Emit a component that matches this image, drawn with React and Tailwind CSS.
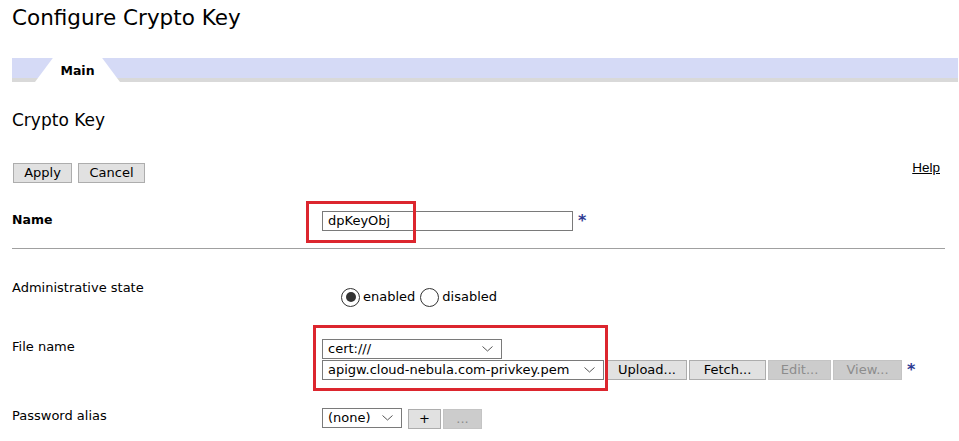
import React from 'react';

const Chevron = () => (
    <svg width="11" height="6" viewBox="0 0 11 6" className="shrink-0">
        <polyline points="0.5,0.5 5.5,5 10.5,0.5" fill="none" stroke="#555" strokeWidth="1" />
    </svg>
);

const Select = ({ value, width }) => (
    <div
        className="flex items-center justify-between h-[20px] border border-[#7a7a7a] bg-white pl-[5px] pr-[8px] text-[13px] leading-[16px] whitespace-nowrap"
        style={{ width }}
    >
        <span>{value}</span>
        <Chevron />
    </div>
);

const Btn = ({ children, width, disabled }) => (
    <div
        className={`h-[20px] flex items-center justify-center border text-[13px] leading-[16px] ${disabled ? 'bg-[#cccccc] border-[#c4c4c4] text-[#8c8c8c]' : 'bg-[#e1e1e1] border-[#adadad] text-black'}`}
        style={{ width }}
    >
        {children}
    </div>
);

const Radio = ({ checked }) => (
    <div className="w-[19px] h-[19px] rounded-full border border-[#333] flex items-center justify-center bg-white">
        {checked && <div className="w-[10px] h-[10px] rounded-full bg-[#333]" />}
    </div>
);

const Star = () => (
    <span className="text-[#2e3a92] font-bold text-[16px] leading-[16px]">*</span>
);

export default function App() {
    return (
        <div className="relative w-[959px] h-[441px] overflow-hidden bg-white text-black font-['DejaVu_Sans',Verdana,sans-serif] text-[13px]">
            {/* title */}
            <h1 className="pl-3 pt-[5px] text-[21.5px] leading-[26px] font-normal">Configure Crypto Key</h1>

            {/* tab bar */}
            <div className="mt-[27px] ml-3 w-[946px] h-[24px] box-border bg-[#d5daf6] border-b-[4px] border-[#d9d9d9] flex items-start">
                <div className="ml-[23px] w-[85px] h-[24px] shrink-0 bg-white [clip-path:polygon(21%_0,79%_0,100%_100%,0_100%)] text-center font-bold text-[12.5px] leading-[22px] pt-[2px]">
                    Main
                </div>
            </div>

            <h2 className="mt-[28px] pl-3 text-[17px] leading-[20px]">Crypto Key</h2>

            {/* action row */}
            <div className="mt-[33px] flex items-start w-[940px] pl-[13px] gap-[6px]">
                <Btn width={59}>Apply</Btn>
                <Btn width={67}>Cancel</Btn>
                <a className="ml-auto -mt-[2px] font-['Liberation_Sans',Arial,sans-serif] text-[13.5px] leading-[14px] underline text-black">Help</a>
            </div>

            {/* Name */}
            <div className="mt-[28px] flex items-start pl-3">
                <div className="w-[310px] font-bold text-[12.5px] leading-[16px] pt-[0.5px]">Name</div>
                <div className="w-[251px] h-[20px] border border-[#7a7a7a] pl-[5px] text-[13px] leading-[18px]">dpKeyObj</div>
                <div className="ml-[5px] mt-[1px]"><Star /></div>
            </div>

            <div className="mt-[16px] ml-3 w-[933px] h-px bg-[#a0a0a0]" />

            {/* Administrative state */}
            <div className="mt-[31px] flex items-start pl-3">
                <div className="w-[310px] leading-[16px]">Administrative state</div>
                <div className="mt-[8px] ml-[19px] flex items-center">
                    <Radio checked />
                    <span className="ml-[3px] leading-[16px]">enabled</span>
                    <div className="ml-[5px]"><Radio /></div>
                    <span className="ml-[3px] leading-[16px]">disabled</span>
                </div>
            </div>

            {/* File name */}
            <div className="mt-[32px] flex items-start pl-3">
                <div className="w-[310px] leading-[16px] pt-[0.5px]">File name</div>
                <div className="flex flex-col gap-[1px]">
                    <Select value="cert:///" width={180} />
                    <div className="flex items-start">
                        <Select value="apigw.cloud-nebula.com-privkey.pem" width={282} />
                        <div className="ml-[3px] flex gap-[2px]">
                            <Btn width={80}>Upload...</Btn>
                            <Btn width={77}>Fetch...</Btn>
                            <Btn width={63} disabled>Edit...</Btn>
                            <Btn width={69} disabled>View...</Btn>
                        </div>
                        <div className="ml-[5px] mt-[1px]"><Star /></div>
                    </div>
                </div>
            </div>

            {/* Password alias */}
            <div className="mt-[28px] flex items-start pl-3">
                <div className="w-[310px] leading-[16px]">Password alias</div>
                <Select value="(none)" width={80} />
                <div className="ml-[6px] mt-[1px] flex gap-[2px]">
                    <Btn width={33}>+</Btn>
                    <Btn width={39} disabled>...</Btn>
                </div>
            </div>

            {/* highlight boxes */}
            <div className="absolute left-[306px] top-[201px] w-[110px] h-[42px] border-[3px] border-[#dc262e]" />
            <div className="absolute left-[313px] top-[325px] w-[295px] h-[66px] border-[3px] border-[#dc262e]" />
        </div>
    );
}
